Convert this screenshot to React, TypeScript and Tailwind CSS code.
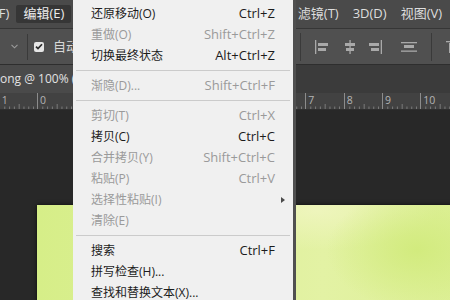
import React from "react";

// Photoshop "编辑" menu dropped open over the workspace.
// The workspace rows (menu bar, options bar, tabs, ruler, canvas) are laid out in flow;
// only the dropdown is absolutely placed because it sits on top of them.

type MenuEntry =
  | {
      kind: "item";
      label: string;
      shortcut?: string;
      disabled?: boolean;
      submenu?: boolean;
    }
  | { kind: "sep" };

const EDIT_MENU: MenuEntry[] = [
  { kind: "item", label: "还原移动(O)", shortcut: "Ctrl+Z" },
  { kind: "item", label: "重做(O)", shortcut: "Shift+Ctrl+Z", disabled: true },
  { kind: "item", label: "切换最终状态", shortcut: "Alt+Ctrl+Z" },
  { kind: "sep" },
  { kind: "item", label: "渐隐(D)...", shortcut: "Shift+Ctrl+F", disabled: true },
  { kind: "sep" },
  { kind: "item", label: "剪切(T)", shortcut: "Ctrl+X", disabled: true },
  { kind: "item", label: "拷贝(C)", shortcut: "Ctrl+C" },
  { kind: "item", label: "合并拷贝(Y)", shortcut: "Shift+Ctrl+C", disabled: true },
  { kind: "item", label: "粘贴(P)", shortcut: "Ctrl+V", disabled: true },
  { kind: "item", label: "选择性粘贴(I)", disabled: true, submenu: true },
  { kind: "item", label: "清除(E)", disabled: true },
  { kind: "sep" },
  { kind: "item", label: "搜索", shortcut: "Ctrl+F" },
  { kind: "item", label: "拼写检查(H)..." },
  { kind: "item", label: "查找和替换文本(X)..." },
  { kind: "sep" },
  { kind: "item", label: "填充(L)...", shortcut: "Shift+F5" },
];

const TOP_MENUS = [
  "文件(F)",
  "编辑(E)",
  "图像(I)",
  "图层(L)",
  "文字(Y)",
  "选择(S)",
  "滤镜(T)",
  "3D(D)",
  "视图(V)",
  "窗口(W)",
  "帮助(H)",
];

// ruler labels, one per major tick (origin sits at x=37)
const RULER_LABELS = ["1", "0", "1", "2", "3", "4", "5", "6", "7", "8", "9", "10", "11"];

function MenuBar() {
  return (
    <div className="flex h-[29px] shrink-0 items-center border-b border-[#363636] bg-[#4a4a4a] text-[13px] text-[#dedede]">
      <div className="-ml-[38px] flex items-center">
        {TOP_MENUS.map((m) => {
          const active = m === "编辑(E)";
          // items that sit under the dropdown are a hair wider, to line up 滤镜 with the picture
          const hidden = ["图像(I)", "图层(L)", "文字(Y)", "选择(S)"].includes(m);
          return (
            <span
              key={m}
              className={
                active
                  ? "flex h-[18px] items-center rounded-[2px] bg-[#363636] px-[7px] whitespace-nowrap text-[#ececec]"
                  : hidden
                    ? "flex h-[18px] items-center px-[7.5px] whitespace-nowrap"
                    : "flex h-[18px] items-center px-[7px] whitespace-nowrap"
              }
            >
              {m}
            </span>
          );
        })}
      </div>
    </div>
  );
}

function AlignIcon({ variant }: { variant: "left" | "center" | "right" | "dist" | "top" }) {
  const c = "#a9a9a9";
  return (
    <svg width="16" height="14" viewBox="0 0 16 14" fill="none">
      {variant === "left" && (
        <>
          <rect x="1" y="0" width="1.3" height="14" fill={c} />
          <rect x="4" y="3" width="10" height="3" fill={c} />
          <rect x="4" y="8" width="8" height="3" fill={c} />
        </>
      )}
      {variant === "center" && (
        <>
          <rect x="7.4" y="0" width="1.3" height="14" fill={c} />
          <rect x="3" y="3" width="10" height="3" fill={c} />
          <rect x="4" y="8" width="8" height="3" fill={c} />
        </>
      )}
      {variant === "right" && (
        <>
          <rect x="13.7" y="0" width="1.3" height="14" fill={c} />
          <rect x="2" y="3" width="10" height="3" fill={c} />
          <rect x="4" y="8" width="8" height="3" fill={c} />
        </>
      )}
      {variant === "dist" && (
        <>
          <rect x="0" y="2" width="16" height="1.3" fill={c} />
          <rect x="3" y="5" width="10" height="3" fill={c} />
          <rect x="0" y="10.5" width="16" height="1.3" fill={c} />
        </>
      )}
      {variant === "top" && (
        <>
          <rect x="0" y="1" width="14" height="1.3" fill={c} />
          <rect x="3" y="3" width="3" height="10" fill={c} />
          <rect x="9" y="3" width="3" height="7" fill={c} />
        </>
      )}
    </svg>
  );
}

function OptionsBar() {
  return (
    <div className="flex h-[36px] shrink-0 items-center border-b border-[#2e2e2e] bg-[#505050] text-[13px] text-[#d8d8d8]">
      <svg className="ml-[11px]" width="7" height="5" viewBox="0 0 7 5" fill="none">
        <path d="M0.5 0.8 L3.5 3.8 L6.5 0.8" stroke="#9c9c9c" strokeWidth="1.1" />
      </svg>
      <div className="ml-[9px] h-[26px] w-px bg-[#3a3a3a]" />
      <span className="ml-[6px] flex h-[10px] w-[10px] items-center justify-center rounded-[2px] bg-[#e6e6e6]">
        <svg width="8" height="7" viewBox="0 0 8 7" fill="none">
          <path d="M1 3.6 L3 5.6 L7 1.2" stroke="#2b2b2b" strokeWidth="1.7" />
        </svg>
      </span>
      <span className="ml-[9px] whitespace-nowrap">自动选择: 图层</span>

      <div className="-mr-[12px] ml-auto flex items-center">
        <div className="h-[28px] w-px bg-[#3a3a3a]" />
        <span className="ml-[13px]">
          <AlignIcon variant="left" />
        </span>
        <span className="ml-[12px]">
          <AlignIcon variant="center" />
        </span>
        <span className="ml-[9px]">
          <AlignIcon variant="right" />
        </span>
        <span className="ml-[18px]">
          <AlignIcon variant="dist" />
        </span>
        <div className="ml-[14px] h-[28px] w-px bg-[#3a3a3a]" />
        <span className="ml-[14px]">
          <AlignIcon variant="top" />
        </span>
      </div>
    </div>
  );
}

function TabBar() {
  return (
    <div className="flex h-[28px] shrink-0 bg-[#3b3b3b]">
      <div className="flex w-[220px] items-center bg-[#4a4a4a] text-[12px] whitespace-nowrap text-[#e2e2e2]">
        ong @ 100% (图层 1, RGB/8#)
      </div>
    </div>
  );
}

function Ruler() {
  return (
    <div className="flex h-[17px] shrink-0 overflow-hidden border-b border-[#2f2f2f] bg-[#424242]">
      <div className="-ml-[1.3px] flex">
        {RULER_LABELS.map((n, i) => (
          <div
            key={i}
            className="relative h-full w-[38.33px] shrink-0 border-l border-[#8c8c8c]"
          >
            <span className="block pt-[1px] pl-[2px] text-[10.5px] leading-[12px] text-[#b4b4b4]">
              {n}
            </span>
            <svg className="absolute bottom-0 left-0" width="38" height="5" viewBox="0 0 38 5">
              {[1, 2, 3, 4, 5, 6, 7].map((k) => (
                <rect
                  key={k}
                  x={k * 4.79 - 0.5}
                  y={k === 4 ? 0 : 2.5}
                  width="1"
                  height={k === 4 ? 5 : 2.5}
                  fill="#7a7a7a"
                />
              ))}
            </svg>
          </div>
        ))}
      </div>
    </div>
  );
}

function EditMenu() {
  return (
    <div className="absolute top-0 bottom-0 left-[73px] flex">
      <div className="w-[220px] overflow-hidden bg-[#f0f0f0] pt-[3px]">
        {EDIT_MENU.map((entry, i) =>
          entry.kind === "sep" ? (
            <div key={i} className="flex h-[9px] items-center px-[3px]">
              <div className="h-px w-full bg-[#cbcbcb]" />
            </div>
          ) : (
            <div
              key={i}
              className={
                entry.disabled
                  ? "flex h-[21px] items-center pr-[8px] pl-[18px] text-[#9a9a9a]"
                  : "flex h-[21px] items-center pr-[8px] pl-[18px] text-[#1c1c1c]"
              }
            >
              <span className="flex-1 text-[12px] whitespace-nowrap">{entry.label}</span>
              {entry.shortcut && (
                <span className="text-[13px] whitespace-nowrap">{entry.shortcut}</span>
              )}
              <span className="flex w-[10px] justify-end">
                {entry.submenu && (
                  <span className="h-0 w-0 border-y-[3.5px] border-l-[4px] border-y-transparent border-l-[#4a4a4a]" />
                )}
              </span>
            </div>
          ),
        )}
      </div>
      {/* thin shadow strip on the right edge */}
      <div className="w-[3px] bg-[#505050]" />
    </div>
  );
}

export default function App() {
  return (
    <div className="relative flex h-[300px] w-[450px] flex-col overflow-hidden bg-[#282828] font-['Open_Sans','Noto_Sans_CJK_SC',sans-serif]">
      <MenuBar />
      <OptionsBar />
      <TabBar />
      <Ruler />

      {/* canvas: document starts 37px in, 95px down */}
      <div className="min-h-0 flex-1 pt-[95px] pl-[37px]">
        <div className="h-[120px] w-[440px] bg-[radial-gradient(ellipse_90px_60px_at_380px_45px,#d2eb7e_0%,transparent_100%),radial-gradient(ellipse_120px_40px_at_280px_5px,#eef5bc_0%,transparent_100%),linear-gradient(90deg,#d6ee88_0%,#dff09c_45%,#e3f2a4_65%,#dcef94_100%)] shadow-[0_0_4px_rgba(0,0,0,0.7)]" />
      </div>

      <EditMenu />
    </div>
  );
}
